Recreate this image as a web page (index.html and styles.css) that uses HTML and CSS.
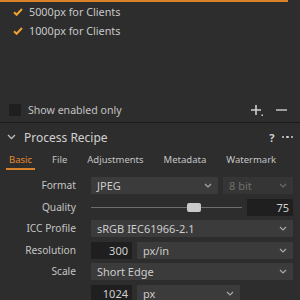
FILE: index.html
```html
<!DOCTYPE html>
<html>
<head>
<meta charset="utf-8">
<link rel="stylesheet" href="styles.css">
</head>
<body>
<div class="app">
  <div class="topline"></div>
  <div class="list">
    <div class="item">
      <svg class="check" width="10" height="8" viewBox="0 0 10 8"><polyline points="1,4.2 3.6,6.8 9,1" fill="none" stroke="#f0a030" stroke-width="2"/></svg>
      <span>5000px for Clients</span>
    </div>
    <div class="item">
      <svg class="check" width="10" height="8" viewBox="0 0 10 8"><polyline points="1,4.2 3.6,6.8 9,1" fill="none" stroke="#f0a030" stroke-width="2"/></svg>
      <span>1000px for Clients</span>
    </div>
  </div>
  <div class="showrow">
    <span class="box"></span>
    <span class="showlabel">Show enabled only</span>
    <span class="actions">
      <svg width="14" height="13" viewBox="0 0 14 13"><path d="M6 1v10M1 6h10" stroke="#cfcfcf" stroke-width="1.6" fill="none"/><rect x="11.5" y="10.5" width="1.5" height="1.5" fill="#cfcfcf"/></svg>
      <svg width="13" height="13" viewBox="0 0 13 13"><path d="M1 6h11" stroke="#cfcfcf" stroke-width="1.4" fill="none"/></svg>
    </span>
  </div>
  <div class="sep"></div>
  <div class="header">
    <svg class="chev" width="9" height="6" viewBox="0 0 9 6"><polyline points="1,1 4.5,4.5 8,1" fill="none" stroke="#bdbdbd" stroke-width="1.3"/></svg>
    <span class="title">Process Recipe</span>
    <span class="hicons"><span class="q">?</span><span class="dots"><i></i><i></i><i></i></span></span>
  </div>
  <div class="tabs">
    <span class="tab active">Basic</span>
    <span class="tab">File</span>
    <span class="tab">Adjustments</span>
    <span class="tab">Metadata</span>
    <span class="tab">Watermark</span>
  </div>
  <div class="form">
    <div class="label">Format</div>
    <div class="ctrl">
      <div class="select grow">JPEG<svg class="dd" width="8" height="5" viewBox="0 0 8 5"><polyline points="1,1 4,4 7,1" fill="none" stroke="#a8a8a8" stroke-width="1.2"/></svg></div>
      <div class="select bits disabled">8 bit<svg class="dd" width="8" height="5" viewBox="0 0 8 5"><polyline points="1,1 4,4 7,1" fill="none" stroke="#6a6a6a" stroke-width="1.2"/></svg></div>
    </div>
    <div class="label">Quality</div>
    <div class="ctrl">
      <div class="slider grow"><div class="track"></div><div class="thumb" style="left: 68%"></div></div>
      <div class="num qnum">75</div>
    </div>
    <div class="label">ICC Profile</div>
    <div class="ctrl">
      <div class="select grow">sRGB IEC61966-2.1<svg class="dd" width="8" height="5" viewBox="0 0 8 5"><polyline points="1,1 4,4 7,1" fill="none" stroke="#a8a8a8" stroke-width="1.2"/></svg></div>
    </div>
    <div class="label">Resolution</div>
    <div class="ctrl">
      <div class="num small">300</div>
      <div class="select grow">px/in<svg class="dd" width="8" height="5" viewBox="0 0 8 5"><polyline points="1,1 4,4 7,1" fill="none" stroke="#a8a8a8" stroke-width="1.2"/></svg></div>
    </div>
    <div class="label">Scale</div>
    <div class="ctrl">
      <div class="select grow">Short Edge<svg class="dd" width="8" height="5" viewBox="0 0 8 5"><polyline points="1,1 4,4 7,1" fill="none" stroke="#a8a8a8" stroke-width="1.2"/></svg></div>
    </div>
    <div class="label"></div>
    <div class="ctrl">
      <div class="num small">1024</div>
      <div class="select unit">px<svg class="dd" width="8" height="5" viewBox="0 0 8 5"><polyline points="1,1 4,4 7,1" fill="none" stroke="#a8a8a8" stroke-width="1.2"/></svg></div>
    </div>
  </div>
</div>
</body>
</html>
```
FILE: styles.css
```css
html, body {
  margin: 0;
  padding: 0;
  background: #2d2d2d;
}
.app {
  width: 300px;
  height: 300px;
  overflow: hidden;
  background: #2d2d2d;
  font-family: "Noto Sans", "Open Sans", sans-serif;
  font-size: 10.5px;
  color: #c6c6c6;
  display: flex;
  flex-direction: column;
}
.topline {
  height: 2px;
  background: #d9822b;
  margin-right: 12px;
  flex: none;
}
.list {
  height: 98px;
  flex: none;
}
.item {
  height: 19px;
  display: flex;
  align-items: center;
  padding-left: 13px;
  gap: 6px;
  font-size: 10.8px;
  color: #c8c8c8;
}
.check {
  display: block;
}
.showrow {
  height: 20px;
  flex: none;
  display: flex;
  align-items: center;
  padding-left: 9px;
  padding-right: 12px;
}
.box {
  width: 12px;
  height: 12px;
  background: #1f1f1f;
  border-radius: 1px;
}
.showlabel {
  margin-left: 7px;
  font-size: 10.6px;
  color: #c2c2c2;
  flex: 1;
}
.actions {
  display: flex;
  gap: 11px;
  align-items: center;
}
.actions svg { display: block; }
.sep {
  height: 1px;
  margin-top: 2px;
  background: #1a1a1a;
  flex: none;
}
.header {
  height: 28px;
  flex: none;
  display: flex;
  align-items: center;
  padding-left: 7px;
  padding-right: 7px;
}
.chev { display: block; margin-right: 8px; }
.title {
  font-size: 12px;
  color: #d2d2d2;
  flex: 1;
}
.hicons {
  display: flex;
  align-items: center;
  gap: 7px;
}
.q {
  font-weight: bold;
  font-size: 11px;
  color: #cfcfcf;
}
.dots {
  display: flex;
  gap: 2px;
}
.dots i {
  width: 2.5px;
  height: 2.5px;
  background: #cfcfcf;
  border-radius: 50%;
}
.tabs {
  height: 19px;
  flex: none;
  display: flex;
  padding-left: 6px;
  gap: 14px;
  font-size: 9.5px;
  color: #c4c4c4;
}
.tab {
  padding: 1px 3px 0 3px;
  line-height: 16px;
  border-bottom: 2px solid transparent;
}
.tab.active {
  color: #e8892e;
  border-bottom-color: #d9822b;
}
.form {
  padding: 7px 7px 0 0;
  display: grid;
  grid-template-columns: 76px 1fr;
  column-gap: 15px;
  row-gap: 4.6px;
  grid-auto-rows: 17px;
}
.label {
  text-align: right;
  line-height: 17px;
  font-size: 10.2px;
  color: #c4c4c4;
}
.ctrl {
  display: flex;
  gap: 5px;
  align-items: stretch;
}
.grow { flex: 1; }
.select {
  background: #3b3b3b;
  display: flex;
  align-items: center;
  justify-content: space-between;
  padding: 0 6px 0 6px;
  font-size: 11px;
  color: #cccccc;
  border-radius: 1px;
}
.dd { display: block; }
.select.bits {
  width: 58px;
  flex: none;
}
.select.disabled {
  background: #353535;
  color: #6f6f6f;
}
.select.unit {
  width: 91px;
  flex: none;
}
.slider {
  position: relative;
}
.track {
  position: absolute;
  left: 0;
  right: 0;
  top: 8px;
  height: 1px;
  background: #6e6e6e;
}
.thumb {
  position: absolute;
  top: 4px;
  width: 14px;
  height: 9px;
  margin-left: -7px;
  background: #c9c9c9;
  border-radius: 2px;
}
.num {
  background: #1f1f1f;
  text-align: right;
  line-height: 17px;
  padding-right: 4px;
  font-size: 11px;
  color: #d0d0d0;
}
.qnum {
  width: 42px;
}
.num.small {
  width: 37px;
}
```
